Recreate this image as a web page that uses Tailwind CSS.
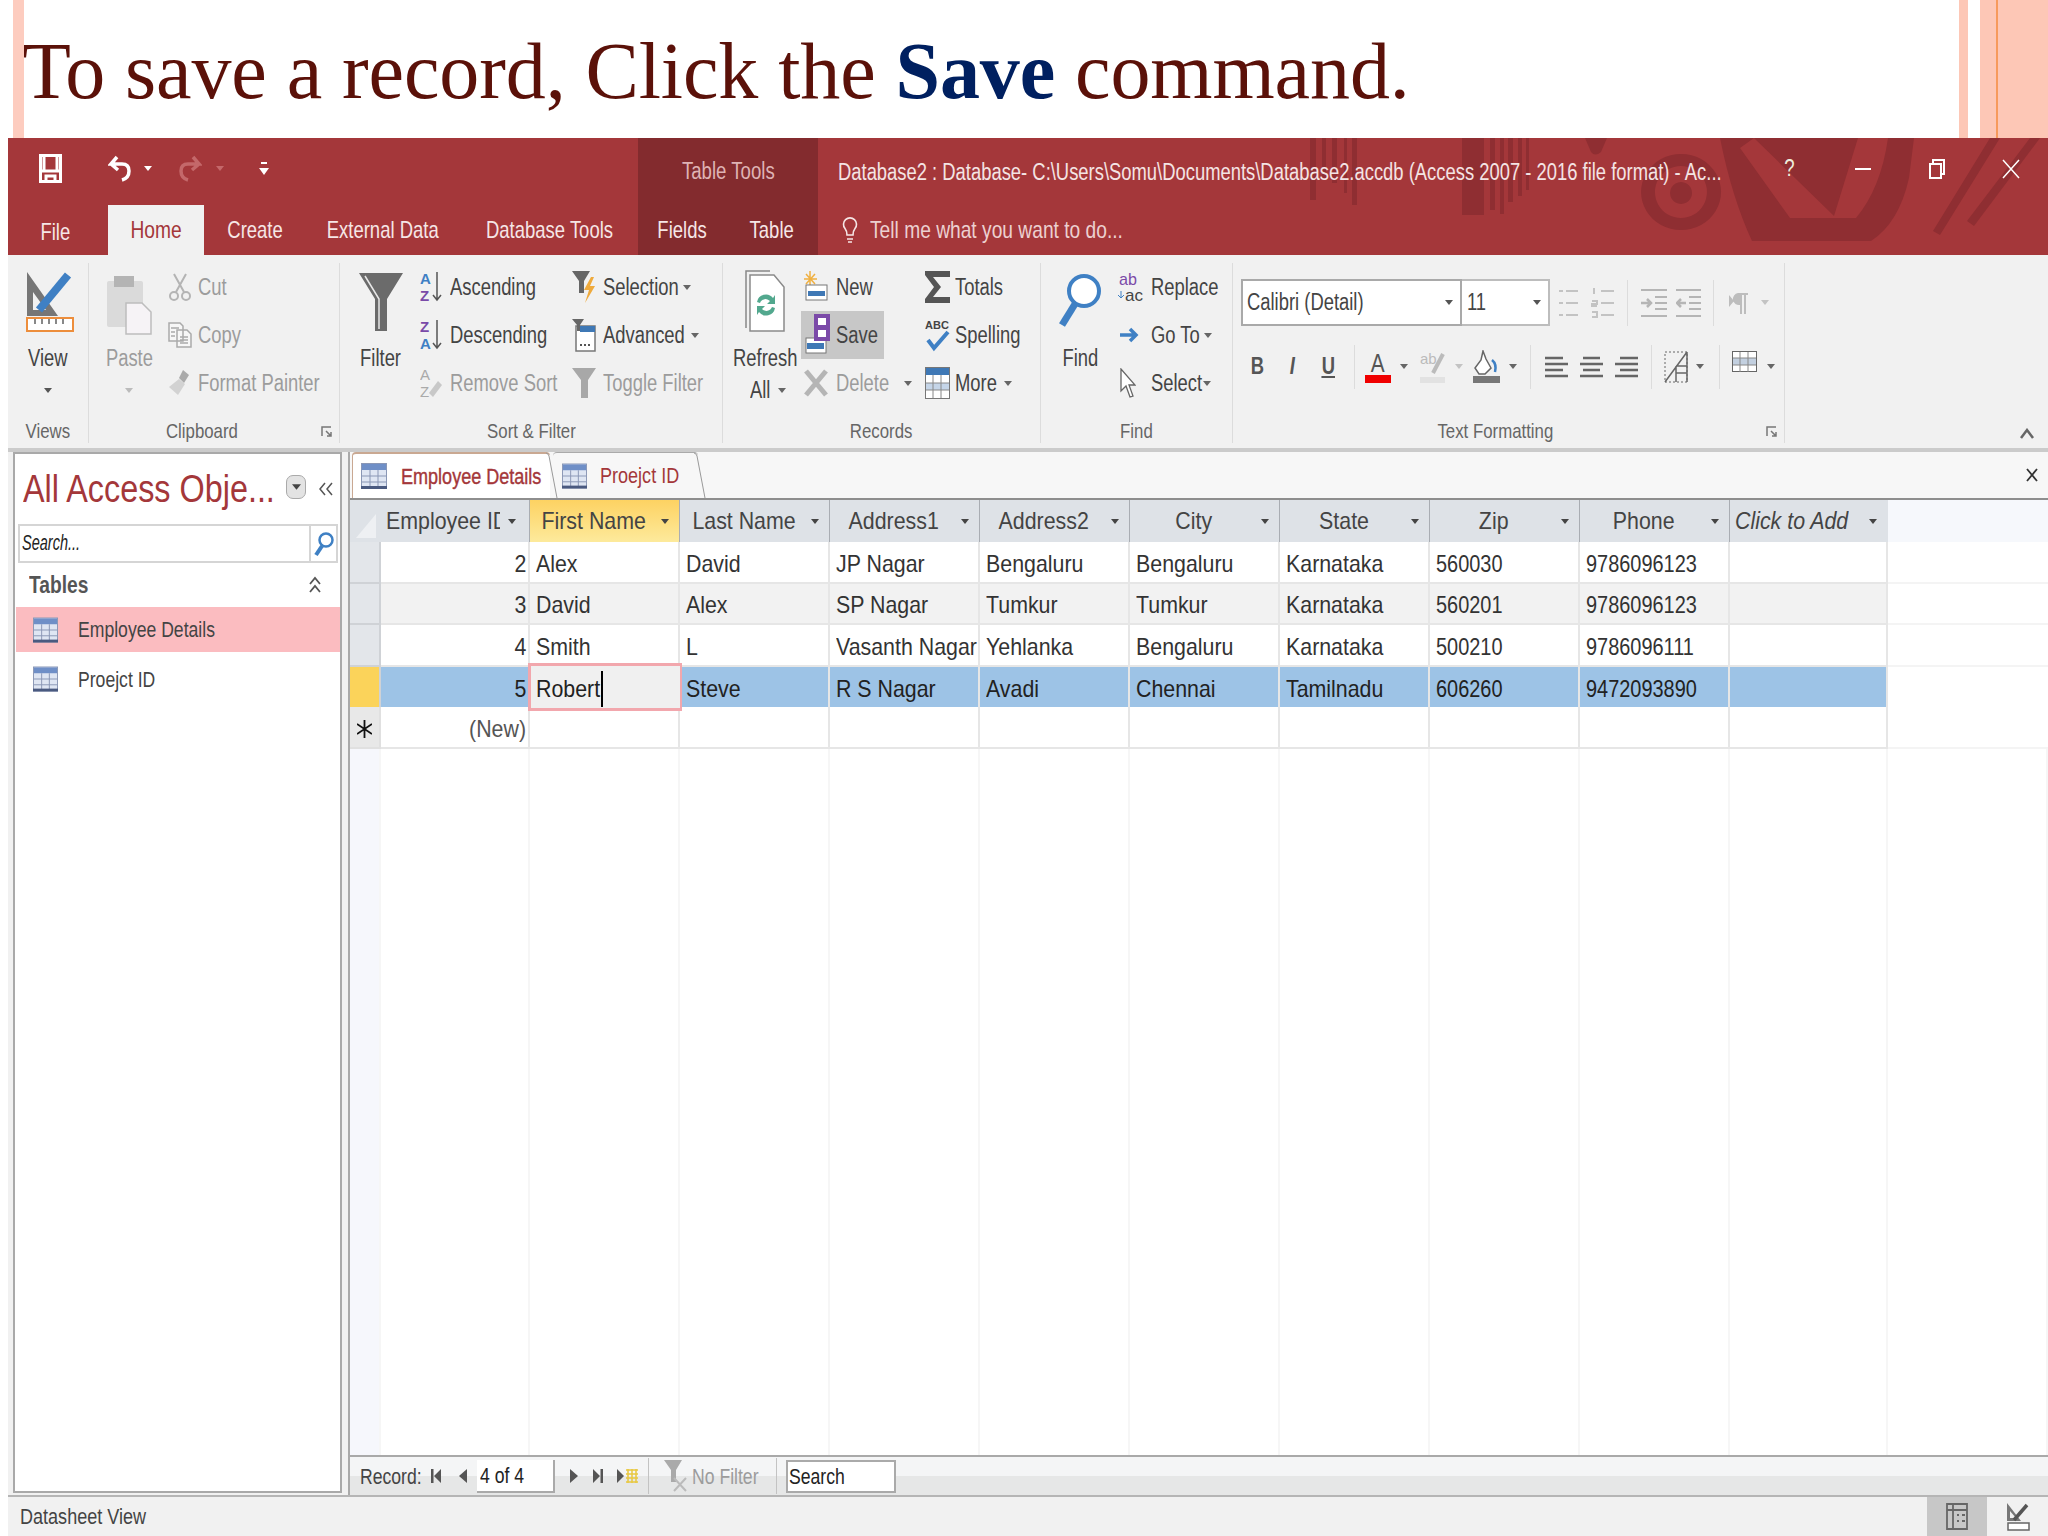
<!DOCTYPE html>
<html lang="en">
<head>
<meta charset="UTF-8">
<title>To save a record</title>
<script src="https://cdn.jsdelivr.net/npm/@tailwindcss/browser@4"></script>
</head>
<body class="bg-white">
<svg class="hidden">
  <symbol id="caret" viewBox="0 0 8 5"><path d="M0 0h8L4 5z" fill="currentColor"/></symbol>
  <symbol id="tbl" viewBox="0 0 26 26">
    <rect x="0.5" y="0.5" width="25" height="25" fill="#dfe6f3" stroke="#8a97b5"/>
    <rect x="1" y="1" width="24" height="6" fill="#6f8fc7"/>
    <path d="M1 13h24M1 19h24M9 7v18M17 7v18" stroke="#8a97b5"/>
    <rect x="0" y="23" width="26" height="3" fill="#4a5a80"/>
  </symbol>
</svg>

<div class="relative w-[2048px] h-[1536px] overflow-hidden bg-white font-['Liberation_Sans',sans-serif] text-[23px] text-[#444] whitespace-nowrap [&_span]:inline-block">

  <!-- slide title -->
  <div class="relative h-[138px] pl-[22px] pt-[25px] text-[80px] leading-[92px] tracking-[-0.1px] text-[#5b1109] font-['Liberation_Serif',serif]">
    To save a record, Click the <b class="text-[#002060]">Save</b> command.
    <div class="absolute left-[13px] top-0 w-[11px] h-full bg-[#fdccbf]"></div>
    <div class="absolute left-[1959px] top-0 w-[9px] h-full bg-[#fdc7b6]"></div>
    <div class="absolute left-[1980px] top-0 w-[68px] h-full bg-[#fdc7b6]"></div>
    <div class="absolute left-[1996px] top-0 w-[2px] h-full bg-[#f79a5c]"></div>
  </div>

  <div class="ml-[8px] w-[2040px] h-[1398px] flex flex-col bg-[#f1f1f1]">

    <!-- title bar -->
    <div class="relative h-[67px] flex items-center bg-[#a4373a] text-[23px] text-[#f4e4e4] [&>div]:shrink-0 [&_span]:origin-left [&_span]:scale-x-81">
      <svg class="absolute left-[1292px] top-0 w-[748px] h-[117px] z-0" viewBox="0 0 748 117" fill="#8f2e32">
        <path d="M10 0h6v62h-6zM22 0h4v40h-4zM32 0h5v45h-5zM44 0h3v55h-3zM52 0h5v67h-5zM162 0h22v77h-22zM190 0h5v72h-5zM200 0h4v76h-4zM208 0h5v64h-5zM218 0h4v58h-4zM226 0h3v52h-3z"/>
        <path d="M285 0h22l-6 14q-6 5-10 0z"/>
        <path fill-rule="evenodd" d="M381 16a40 38 0 1 0 .1 0zM381 28a26 26 0 1 1-.1 0zM381 44a11 11 0 1 0 .1 0z"/>
        <path fill-rule="evenodd" d="M420 0h194l-5 40q-10 45-38 63H452Q432 60 420 0zM440 10l50 70h66q25-30 32-80h-30l-24 78L454 0z"/>
        <path d="M633 93l57-93h10l-60 97zM667 83l63-83h10l-66 88z"/>
      </svg>
      <div class="relative w-[630px] mb-[6px] flex items-center pl-[31px]">
        <svg class="w-[23px] h-[29px]" viewBox="0 0 23 29" fill="none" stroke="#fff" stroke-width="3"><path d="M1.5 1.5h20v26h-20zM5 18V2M18 18V2M3 17h17M7 27v-5h9v5"/></svg>
        <svg class="ml-[46px] w-[24px] h-[27px]" viewBox="0 0 24 27" fill="none" stroke="#fff" stroke-width="3.5"><path d="M9 2L3 9h11q7 0 7 7t-7 9M3 9l7 6"/></svg>
        <svg class="ml-[12px] w-[8px] h-[5px] text-white"><use href="#caret"/></svg>
        <svg class="ml-[26px] w-[24px] h-[27px]" viewBox="0 0 24 27" fill="none" stroke="#c4686a" stroke-width="3.5"><path d="M15 2l6 7H10q-7 0-7 7t7 9M21 9l-7 6"/></svg>
        <svg class="ml-[14px] w-[8px] h-[5px] text-[#c4686a]"><use href="#caret"/></svg>
        <svg class="ml-[35px] w-[10px] h-[14px] text-white" viewBox="0 0 10 14" fill="currentColor"><path d="M2 0h6v2H2zM0 6h10l-5 7z"/></svg>
      </div>
      <div class="relative w-[180px] h-full flex items-center justify-center bg-[#832b2e] text-[#dfb3b4]"><span class="!origin-center">Table Tools</span></div>
      <div class="relative ml-[20px] pt-[2px] w-[885px]"><span class="!scale-x-80">Database2 : Database- C:\Users\Somu\Documents\Database2.accdb (Access 2007 - 2016 file format) - Ac...</span></div>
      <div class="relative ml-[29px] mb-[6px] flex text-[#eed]">
        <div class="w-[74px] flex justify-center"><span class="!origin-center">?</span></div>
        <div class="w-[74px] flex justify-center items-center"><div class="w-[16px] h-[2px] bg-white"></div></div>
        <div class="w-[74px] flex justify-center items-center">
          <svg class="w-[16px] h-[20px]" viewBox="0 0 16 20" fill="none" stroke="#fff" stroke-width="2"><path d="M4 4V1h11v14h-3M1 5h11v14H1z"/></svg>
        </div>
        <div class="w-[74px] flex justify-center items-center">
          <svg class="w-[18px] h-[20px]" viewBox="0 0 18 20" fill="none" stroke="#fff" stroke-width="1.5"><path d="M1 1l16 18M17 1L1 19"/></svg>
        </div>
      </div>
    </div>

    <!-- tabs -->
    <div class="h-[50px] flex items-stretch bg-[#a4373a] text-[24px] text-[#f6e6e6] [&_span]:origin-center [&_span]:scale-x-77 [&>div]:flex [&>div]:items-center [&>div]:justify-center">
      <div class="w-[100px] pr-[6px] pt-[4px]"><span>File</span></div>
      <div class="w-[96px] bg-[#f1f1f1] text-[#a4373a]"><span class="!scale-x-80">Home</span></div>
      <div class="w-[102px]"><span>Create</span></div>
      <div class="w-[154px]"><span>External Data</span></div>
      <div class="w-[178px]"><span>Database Tools</span></div>
      <div class="w-[88px] bg-[#832b2e]"><span>Fields</span></div>
      <div class="w-[92px] bg-[#832b2e]"><span>Table</span></div>
      <div class="ml-[24px] w-[420px] !justify-start gap-[12px] text-[#ecd0d0]">
        <svg class="w-[16px] h-[28px]" viewBox="0 0 16 28" fill="none" stroke="#f6e6e6" stroke-width="1.6"><path d="M5 19q0-4-2-6.500a6.500 6.500 0 1 1 10 0q-2 2.500-2 6.500zM5 23h6M6 26h4"/></svg>
        <span class="!origin-left !scale-x-80">Tell me what you want to do...</span>
      </div>
    </div>

    <!-- ribbon -->
    <div class="h-[193px] flex bg-[#f1f1f1] [&_span]:origin-left [&_span]:scale-x-80">

      <!-- Views -->
      <div class="w-[81px] mt-[8px] h-[180px] flex flex-col items-stretch border-r border-[#dcdcdc]">
        <div class="h-[156px] shrink-0 flex flex-col items-center pl-[4px]">
          <div class="h-[79px] flex items-start pt-[7px]">
            <svg class="w-[48px] h-[62px]" viewBox="0 0 48 62">
              <path fill="#767676" fill-rule="evenodd" d="M1 2v44h31zM7 22v18h13z"/>
              <path d="M13 40L42 5" stroke="#3f80c4" stroke-width="8"/>
              <rect x="1" y="48" width="46" height="13" fill="#fff" stroke="#ed8e3c" stroke-width="2"/>
              <path d="M9 49v5M16 49v5M23 49v5M30 49v5M37 49v5" stroke="#888" stroke-width="2"/>
            </svg>
          </div>
          <div class="h-[32px] -ml-[5px] flex items-center"><span class="!origin-center">View</span></div>
          <div class="h-[32px] -ml-[5px] flex items-center text-[#555]"><svg class="w-[8px] h-[5px]"><use href="#caret"/></svg></div>
        </div>
        <div class="text-center text-[21px] leading-[24px] text-[#666]"><span class="!origin-center">Views</span></div>
      </div>

      <!-- Clipboard -->
      <div class="w-[251px] mt-[8px] h-[180px] flex flex-col border-r border-[#dcdcdc] text-[#9c9c9c]">
        <div class="h-[156px] shrink-0 flex [&>div]:shrink-0">
          <div class="ml-[16px] w-[48px] flex flex-col items-center">
            <div class="h-[79px] pt-[10px]">
              <svg class="w-[46px] h-[62px]" viewBox="0 0 46 62">
                <rect x="1" y="8" width="36" height="46" rx="2" fill="#dadada"/>
                <rect x="8" y="3" width="20" height="11" fill="#b4b4b4"/>
                <path d="M20 30h16l9 9v22H20z" fill="#f6f3f6" stroke="#bdbdbd" stroke-width="1.5"/>
              </svg>
            </div>
            <div class="h-[32px] flex items-center"><span class="!origin-center">Paste</span></div>
            <div class="h-[32px] flex items-center text-[#bbb]"><svg class="w-[8px] h-[5px]"><use href="#caret"/></svg></div>
          </div>
          <div class="ml-[15px] flex flex-col [&>div]:h-[48px] [&>div]:flex [&>div]:items-center">
            <div>
              <div class="w-[30px]"><svg class="w-[24px] h-[28px]" viewBox="0 0 24 28" fill="none" stroke="#b4b4b4" stroke-width="2"><circle cx="6" cy="23" r="4"/><circle cx="18" cy="23" r="4"/><path d="M8 19L18 1M16 19L6 1"/></svg></div>
              <span>Cut</span>
            </div>
            <div>
              <div class="w-[30px]"><svg class="w-[24px] h-[26px]" viewBox="0 0 24 26" fill="#f7f7f7" stroke="#aaa" stroke-width="1.5"><path d="M1 1h11l3 3v15H1zM9 8h10l4 4v13H9zM3 6h8M3 10h4M3 14h4M12 15h8M12 18h8M12 21h8"/></svg></div>
              <span>Copy</span>
            </div>
            <div>
              <div class="w-[30px]"><svg class="w-[24px] h-[28px]" viewBox="0 0 24 28"><path d="M15 1l6 5-5 8-5-5z" fill="#aaa"/><path d="M11 10l6 5-7 11-9-8z" fill="#d2d2d2"/></svg></div>
              <span>Format Painter</span>
            </div>
          </div>
        </div>
        <div class="relative text-center text-[21px] leading-[24px] text-[#666] pr-[24px]"><span class="!origin-center">Clipboard</span>
          <svg class="absolute right-[7px] top-[7px] w-[11px] h-[11px]" viewBox="0 0 11 11" fill="none" stroke="#777" stroke-width="1.500"><path d="M10 1H1v9M5 5l5 5M6 10h4V6"/></svg>
        </div>
      </div>

      <!-- Sort & Filter -->
      <div class="w-[383px] mt-[8px] h-[180px] flex flex-col border-r border-[#dcdcdc]">
        <div class="h-[156px] shrink-0 flex [&>div]:shrink-0">
          <div class="ml-[11px] w-[60px] flex flex-col items-center">
            <div class="h-[79px] pt-[10px]">
              <svg class="w-[44px] h-[58px]" viewBox="0 0 44 58"><path d="M0 0h44L28 26v32H16V26z" fill="#6b6b6b"/><path d="M6 3l14 23v30" fill="none" stroke="#e8e8e8" stroke-width="1.5"/></svg>
            </div>
            <div class="h-[32px] flex items-center"><span class="!origin-center">Filter</span></div>
          </div>
          <div class="ml-[9px] w-[152px] flex flex-col [&>div]:h-[48px] [&>div]:flex [&>div]:items-center">
            <div>
              <div class="w-[30px] shrink-0"><svg class="w-[22px] h-[32px]" viewBox="0 0 22 32" font-family="Liberation Sans" font-size="15" font-weight="bold"><text x="0" y="13" fill="#3f7fc4">A</text><text x="0" y="30" fill="#7a4aa8">Z</text><path d="M17 1v27M13 24l4 5 4-5" fill="none" stroke="#555" stroke-width="1.500"/></svg></div>
              <span>Ascending</span>
            </div>
            <div>
              <div class="w-[30px] shrink-0"><svg class="w-[22px] h-[32px]" viewBox="0 0 22 32" font-family="Liberation Sans" font-size="15" font-weight="bold"><text x="0" y="13" fill="#7a4aa8">Z</text><text x="0" y="30" fill="#3f7fc4">A</text><path d="M17 1v27M13 24l4 5 4-5" fill="none" stroke="#555" stroke-width="1.500"/></svg></div>
              <span>Descending</span>
            </div>
            <div class="text-[#9c9c9c]">
              <div class="w-[30px] shrink-0"><svg class="w-[22px] h-[32px]" viewBox="0 0 22 32" font-family="Liberation Sans" font-size="15"><text x="0" y="13" fill="#aaa">A</text><text x="0" y="30" fill="#aaa">Z</text><path d="M18 14l4 4-9 12-4-4z" fill="#c8c8c8"/></svg></div>
              <span>Remove Sort</span>
            </div>
          </div>
          <div class="flex flex-col [&>div]:h-[48px] [&>div]:flex [&>div]:items-center">
            <div>
              <div class="w-[31px]"><svg class="w-[23px] h-[32px]" viewBox="0 0 23 32"><path d="M0 0h18L12 10v12H7V10z" fill="#666"/><path d="M19 6l-7 13h5l-4 13 10-17h-5l4-9z" fill="#efaa3c"/></svg></div>
              <div class="w-[80px]"><span>Selection</span></div><svg class="w-[8px] h-[5px] text-[#666]"><use href="#caret"/></svg>
            </div>
            <div>
              <div class="w-[31px]"><svg class="w-[24px] h-[34px]" viewBox="0 0 24 34"><rect x="4" y="8" width="19" height="25" fill="#fff" stroke="#777" stroke-width="1.500"/><rect x="8" y="8" width="15" height="6" fill="#3f78b5"/><path d="M0 1h12L8 7v6H5V7z" fill="#666"/><path d="M8 27h2M12 27h2M16 27h2" stroke="#555" stroke-width="2"/></svg></div>
              <div class="w-[88px]"><span>Advanced</span></div><svg class="w-[8px] h-[5px] text-[#666]"><use href="#caret"/></svg>
            </div>
            <div class="text-[#9c9c9c]">
              <div class="w-[31px]"><svg class="w-[24px] h-[30px]" viewBox="0 0 24 30"><path d="M0 0h24L16 12v18H9V12z" fill="#a8a8a8"/></svg></div>
              <span>Toggle Filter</span>
            </div>
          </div>
        </div>
        <div class="text-center text-[21px] leading-[24px] text-[#666]"><span class="!origin-center">Sort &amp; Filter</span></div>
      </div>

      <!-- Records -->
      <div class="w-[318px] mt-[8px] h-[180px] flex flex-col border-r border-[#dcdcdc]">
        <div class="h-[156px] shrink-0 flex [&>div]:shrink-0">
          <div class="ml-[7px] w-[70px] flex flex-col items-center">
            <div class="h-[79px] pt-[7px]">
              <svg class="w-[40px] h-[62px]" viewBox="0 0 40 62" fill="none">
                <path d="M1 58V1h24" stroke="#888" stroke-width="1.500"/>
                <path d="M5 61V5h24l10 12v44z" fill="#fff" stroke="#8a8a8a" stroke-width="1.500"/>
                <path d="M12 32a9 9 0 0 1 16-4l2-3v9h-8l3-3a6 6 0 0 0-10 2zM30 38a9 9 0 0 1-16 4l-2 3v-9h8l-3 3a6 6 0 0 0 10-2z" fill="#52a88e"/>
              </svg>
            </div>
            <div class="h-[32px] flex items-center"><span class="!origin-center">Refresh</span></div>
            <div class="h-[32px] ml-[6px] flex items-center"><div class="w-[28px]"><span>All</span></div><svg class="w-[8px] h-[5px] text-[#666]"><use href="#caret"/></svg></div>
          </div>
          <div class="ml-[4px] w-[121px] flex flex-col [&>div]:h-[48px] [&>div]:flex [&>div]:items-center">
            <div>
              <div class="w-[32px]"><svg class="w-[24px] h-[32px]" viewBox="0 0 24 32"><path d="M6 0v16M0 8h13M2 3l9 10M11 3l-9 10" stroke="#f0b040" stroke-width="1.500"/><rect x="2" y="14" width="21" height="15" fill="#fff" stroke="#777"/><rect x="4" y="20" width="17" height="5" fill="#3f78b5"/></svg></div>
              <span>New</span>
            </div>
            <div class="-ml-[3px] pl-[3px] w-[83px] bg-[#c7c7c7]">
              <div class="w-[32px] shrink-0"><svg class="w-[26px] h-[42px]" viewBox="0 0 26 42"><rect x="2" y="24" width="20" height="15" fill="#fff" stroke="#777"/><rect x="3" y="29" width="17" height="6" fill="#3f78b5"/><rect x="10" y="0" width="16" height="27" fill="#7b4aa8"/><rect x="14" y="4" width="8" height="7" fill="#fff"/><rect x="14" y="16" width="8" height="7" fill="#fff"/></svg></div>
              <span>Save</span>
            </div>
            <div class="text-[#9c9c9c]">
              <div class="w-[32px]"><svg class="w-[24px] h-[28px]" viewBox="0 0 24 28" stroke="#b5b5b5" stroke-width="5"><path d="M2 2l20 24M22 2L2 26"/></svg></div>
              <div class="w-[68px]"><span>Delete</span></div><svg class="w-[8px] h-[5px] text-[#666]"><use href="#caret"/></svg>
            </div>
          </div>
          <div class="flex flex-col [&>div]:h-[48px] [&>div]:flex [&>div]:items-center">
            <div>
              <div class="w-[30px]"><svg class="w-[25px] h-[32px]" viewBox="0 0 25 32"><path d="M0 0h25v6H8l8 10-8 10h17v6H0v-4l9-12L0 4z" fill="#555"/></svg></div>
              <span>Totals</span>
            </div>
            <div>
              <div class="w-[30px]"><svg class="w-[25px] h-[34px]" viewBox="0 0 25 34"><text x="0" y="11" font-size="11" font-weight="bold" fill="#444" font-family="Liberation Sans">ABC</text><path d="M3 22l6 8L23 14" fill="none" stroke="#3f80c4" stroke-width="4"/></svg></div>
              <span>Spelling</span>
            </div>
            <div>
              <div class="w-[30px]"><svg class="w-[25px] h-[32px]" viewBox="0 0 25 32"><rect x="0.500" y="0.500" width="24" height="31" fill="#fff" stroke="#777"/><rect x="1" y="1" width="23" height="7" fill="#3f78b5"/><rect x="1" y="16" width="23" height="7" fill="#c5d5e8"/><path d="M1 16h23M1 23h23M8 8v23M16 8v23" stroke="#888"/></svg></div>
              <div class="w-[49px]"><span>More</span></div><svg class="w-[8px] h-[5px] text-[#666]"><use href="#caret"/></svg>
            </div>
          </div>
        </div>
        <div class="text-center text-[21px] leading-[24px] text-[#666] pr-[1px]"><span class="!origin-center">Records</span></div>
      </div>

      <!-- Find -->
      <div class="w-[192px] mt-[8px] h-[180px] flex flex-col border-r border-[#dcdcdc]">
        <div class="h-[156px] shrink-0 flex [&>div]:shrink-0">
          <div class="ml-[4px] w-[70px] flex flex-col items-center">
            <div class="h-[79px] pt-[10px]">
              <svg class="w-[44px] h-[56px]" viewBox="0 0 44 56" fill="none" stroke="#3f80c4"><circle cx="26" cy="18" r="15" stroke-width="4" fill="#fff"/><path d="M17 31L4 52" stroke-width="7"/></svg>
            </div>
            <div class="h-[32px] flex items-center"><span class="!origin-center">Find</span></div>
          </div>
          <div class="ml-[3px] flex flex-col [&>div]:h-[48px] [&>div]:flex [&>div]:items-center">
            <div>
              <div class="w-[33px]"><svg class="w-[26px] h-[32px]" viewBox="0 0 26 32" font-family="Liberation Sans" font-size="17"><text x="1" y="14" fill="#7b4aa8" textLength="18" lengthAdjust="spacingAndGlyphs">ab</text><text x="7" y="30" fill="#444" textLength="18" lengthAdjust="spacingAndGlyphs">ac</text><path d="M3 20v7M0 24l3 3 3-3" stroke="#3f80c4" fill="none"/></svg></div>
              <span>Replace</span>
            </div>
            <div>
              <div class="w-[33px]"><svg class="w-[19px] h-[16px] ml-[2px]" viewBox="0 0 19 16" fill="none" stroke="#3f80c4" stroke-width="3.500"><path d="M0 8h16M10 2l6 6-6 6"/></svg></div>
              <div class="w-[53px]"><span>Go To</span></div><svg class="w-[8px] h-[5px] text-[#666]"><use href="#caret"/></svg>
            </div>
            <div>
              <div class="w-[33px]"><svg class="w-[16px] h-[31px] ml-[2px]" viewBox="0 0 16 31" fill="#fff" stroke="#666" stroke-width="1.300"><path d="M1 1v22l5-5 4 11 3-1-4-11h6z"/></svg></div>
              <div class="w-[52px]"><span>Select</span></div><svg class="w-[8px] h-[5px] text-[#666]"><use href="#caret"/></svg>
            </div>
          </div>
        </div>
        <div class="text-center text-[21px] leading-[24px] text-[#666]"><span class="!origin-center">Find</span></div>
      </div>

      <!-- Text Formatting -->
      <div class="w-[552px] mt-[8px] h-[180px] flex flex-col border-r border-[#dcdcdc]">
        <div class="h-[156px] shrink-0 pl-[8px] pt-[16px] flex flex-col text-[#555]">
          <div class="h-[47px] flex items-center">
            <div class="w-[221px] h-full flex items-center justify-between pl-[4px] pr-[7px] bg-white border-2 border-[#a9a9a9] text-[#444]"><span>Calibri (Detail)</span><svg class="w-[8px] h-[5px] text-[#555]"><use href="#caret"/></svg></div>
            <div class="w-[88px] h-full flex items-center justify-between pl-[5px] pr-[7px] bg-white border-2 border-l-0 border-[#bdbdbd] text-[#444]"><span>11</span><svg class="w-[8px] h-[5px] text-[#555]"><use href="#caret"/></svg></div>
            <svg class="ml-[8px] w-[20px] h-[30px]" viewBox="0 0 20 30" stroke="#c3c3c3" stroke-width="2"><path d="M8 3h12M8 15h12M8 27h12M1 3h4M1 15h4M1 27h4"/></svg>
            <svg class="ml-[13px] w-[23px] h-[30px]" viewBox="0 0 23 30" fill="none" stroke="#c3c3c3" stroke-width="2"><path d="M10 3h13M10 15h13M10 27h13M3 0v6M1 13h5v3H1v2h5M1 24h5v5H1"/></svg>
            <div class="ml-[13px] w-px h-[46px] bg-[#dcdcdc]"></div>
            <svg class="ml-[13px] w-[26px] h-[30px]" viewBox="0 0 26 30" fill="none" stroke="#b5b5b5" stroke-width="2"><path d="M0 2h26M14 9h12M14 15h12M14 21h12M0 28h26"/><path d="M0 15h9M6 11l4 4-4 4" stroke-width="2.500"/></svg>
            <svg class="ml-[9px] w-[25px] h-[30px]" viewBox="0 0 25 30" fill="none" stroke="#b5b5b5" stroke-width="2"><path d="M0 2h25M13 9h12M13 15h12M13 21h12M0 28h25"/><path d="M1 15h9M5 11l-4 4 4 4" stroke-width="2.500"/></svg>
            <div class="ml-[12px] w-px h-[46px] bg-[#dcdcdc]"></div>
            <svg class="ml-[15px] w-[19px] h-[22px]" viewBox="0 0 19 22" fill="#bdbdbd"><path d="M0 3l5 6-5 6zM9 1h10v2h-2v19h-2V3h-2v19h-2v-9a6 6 0 0 1-2-12z"/></svg>
            <svg class="ml-[13px] w-[8px] h-[5px] text-[#c3c3c3]"><use href="#caret"/></svg>
          </div>
          <div class="mt-[24px] h-[33px] flex items-center">
            <b class="w-[32px] flex justify-center"><span class="!origin-center">B</span></b>
            <i class="w-[38px] flex justify-center font-bold"><span class="!origin-center">I</span></i>
            <b class="w-[34px] flex justify-center underline"><span class="!origin-center underline">U</span></b>
            <div class="ml-[9px] w-px h-[44px] bg-[#dcdcdc]"></div>
            <div class="ml-[10px] w-[26px] flex flex-col items-center leading-[24px] text-[#555]"><span class="!origin-center text-[26px]">A</span><div class="w-full h-[8px] bg-[#f00000]"></div></div>
            <svg class="ml-[9px] w-[8px] h-[5px] text-[#666]"><use href="#caret"/></svg>
            <svg class="ml-[12px] w-[25px] h-[32px]" viewBox="0 0 25 32"><text x="0" y="13" font-size="15" fill="#bbb" font-family="Liberation Sans">ab</text><path d="M13 22L23 3" stroke="#bbb" stroke-width="4"/><rect y="26" width="25" height="6" fill="#e2e2e2"/></svg>
            <svg class="ml-[10px] w-[8px] h-[5px] text-[#c3c3c3]"><use href="#caret"/></svg>
            <svg class="ml-[10px] w-[27px] h-[33px]" viewBox="0 0 27 33" fill="none"><path d="M10 1l3 8 5 9-6 6H6L2 18l6-8z" fill="#fff" stroke="#666" stroke-width="1.500"/><path d="M19 10q5 4 3 12" stroke="#3f80c4" stroke-width="2.500"/><rect y="26" width="27" height="7" fill="#777"/></svg>
            <svg class="ml-[9px] w-[8px] h-[5px] text-[#666]"><use href="#caret"/></svg>
            <div class="ml-[13px] w-px h-[44px] bg-[#dcdcdc]"></div>
            <svg class="ml-[14px] w-[23px] h-[22px]" viewBox="0 0 23 22" stroke="#666" stroke-width="2.500"><path d="M0 2h18M0 8h23M0 14h18M0 20h23"/></svg>
            <svg class="ml-[12px] w-[23px] h-[22px]" viewBox="0 0 23 22" stroke="#666" stroke-width="2.500"><path d="M3 2h17M0 8h23M3 14h17M0 20h23"/></svg>
            <svg class="ml-[12px] w-[23px] h-[22px]" viewBox="0 0 23 22" stroke="#666" stroke-width="2.500"><path d="M5 2h18M0 8h23M5 14h18M0 20h23"/></svg>
            <div class="ml-[13px] w-px h-[44px] bg-[#dcdcdc]"></div>
            <svg class="ml-[12px] w-[24px] h-[32px]" viewBox="0 0 24 32" fill="none" stroke="#666"><path d="M1 1h22v30H1z" stroke-dasharray="2 2"/><path d="M1 31L23 1M12 15v16M12 22h11M12 15h11M23 1v30" stroke-width="1.500"/></svg>
            <svg class="ml-[8px] w-[8px] h-[5px] text-[#666]"><use href="#caret"/></svg>
            <div class="ml-[15px] w-px h-[44px] bg-[#dcdcdc]"></div>
            <svg class="ml-[12px] -mt-[10px] w-[25px] h-[21px]" viewBox="0 0 25 21"><rect x="0.500" y="0.500" width="24" height="20" fill="#fff" stroke="#666"/><rect x="1" y="7" width="23" height="7" fill="#c3d0e0"/><path d="M1 7h23M1 14h23M8 1v20M16 1v20" stroke="#888"/></svg>
            <svg class="ml-[10px] w-[8px] h-[5px] text-[#666]"><use href="#caret"/></svg>
          </div>
        </div>
        <div class="relative text-center text-[21px] leading-[24px] text-[#666] pr-[26px]"><span class="!origin-center">Text Formatting</span>
          <svg class="absolute right-[7px] top-[7px] w-[11px] h-[11px]" viewBox="0 0 11 11" fill="none" stroke="#777" stroke-width="1.500"><path d="M10 1H1v9M5 5l5 5M6 10h4V6"/></svg>
        </div>
      </div>

      <div class="flex-1 flex items-end justify-end pr-[14px] pb-[9px]">
        <svg class="w-[14px] h-[11px]" viewBox="0 0 14 11" fill="none" stroke="#666" stroke-width="2.500"><path d="M1 10l6-8 6 8"/></svg>
      </div>
    </div>

    <div class="h-[4px] bg-[#cbcbcb]"></div>

    <!-- workspace -->
    <div class="h-[1043px] flex">
      <!-- nav pane -->
      <div class="ml-[5px] w-[329px] h-[1041px] flex flex-col border-2 border-[#a9a9a9] bg-white [&_span]:origin-left [&_span]:scale-x-80">
        <div class="h-[70px] flex items-center pl-[8px]">
          <div class="w-[258px] text-[39px] text-[#a4373a]"><span class="!scale-x-83">All Access Obje...</span></div>
          <div class="ml-[5px] mb-[4px] w-[20px] h-[24px] flex items-center justify-center rounded-[7px] bg-[#e3e3e3] border border-[#aaa] text-[#444]"><svg class="w-[9px] h-[6px]"><use href="#caret"/></svg></div>
          <svg class="ml-[13px] w-[14px] h-[14px]" viewBox="0 0 14 14" fill="none" stroke="#555" stroke-width="1.500"><path d="M6 1L1 7l5 6M13 1L8 7l5 6"/></svg>
        </div>
        <div class="ml-[3px] w-[320px] h-[39px] flex border-2 border-[#d5d5d5]">
          <div class="flex-1 pl-[2px] italic text-[22px] leading-[34px] text-[#222]"><span class="!scale-x-66">Search...</span></div>
          <div class="w-[27px] flex items-center justify-center border-l-2 border-[#d5d5d5]">
            <svg class="w-[20px] h-[26px]" viewBox="0 0 20 26" fill="none" stroke="#3f80c4"><circle cx="12" cy="9" r="6.500" stroke-width="2.500"/><path d="M8 15L2 24" stroke-width="4"/></svg>
          </div>
        </div>
        <div class="h-[44px] flex items-center justify-between pl-[14px] pr-[19px]">
          <span class="font-bold text-[#555] text-[24px]">Tables</span>
          <svg class="w-[12px] h-[18px]" viewBox="0 0 12 18" fill="none" stroke="#555" stroke-width="1.800"><path d="M1 8l5-6 5 6M1 16l5-6 5 6"/></svg>
        </div>
        <div class="ml-[1px] w-[324px] h-[45px] flex items-center pl-[17px] bg-[#fbbcc0] text-[22px]">
          <svg class="w-[25px] h-[26px]"><use href="#tbl"/></svg><span class="ml-[20px]">Employee Details</span>
        </div>
        <div class="ml-[1px] h-[54px] flex items-center pl-[17px] text-[22px]">
          <svg class="w-[25px] h-[26px]"><use href="#tbl"/></svg><span class="ml-[20px]">Proejct ID</span>
        </div>
      </div>

      <div class="w-[8px] border-r-2 border-[#a9a9a9]"></div>

      <!-- object pane -->
      <div class="w-[1698px] flex flex-col bg-white">
        <!-- document tabs -->
        <div class="h-[48px] flex items-end justify-start border-b-2 border-[#8e8e8e] bg-[#f7f7f7] text-[22px] text-[#a4373a] [&_span]:origin-left [&_span]:scale-x-82">
          <div class="relative ml-[2px] w-[198px] h-[46px] flex items-center pl-[8px] bg-white border-t-2 border-l border-[#c9a892] rounded-t-[4px]">
            <svg class="w-[26px] h-[26px] shrink-0"><use href="#tbl"/></svg><span class="ml-[14px] [-webkit-text-stroke:0.4px_#a4373a]">Employee Details</span>
            <svg class="absolute -right-[8px] -top-[2px] w-[12px] h-[46px]" viewBox="0 0 12 46" fill="none" stroke="#999"><path d="M0 1q2 0 3 3l8 42"/></svg>
          </div>
          <div class="relative ml-[3px] w-[145px] h-[46px] flex items-center pl-[9px] border-t border-[#aaa] rounded-t-[4px]">
            <svg class="w-[25px] h-[26px] shrink-0"><use href="#tbl"/></svg><span class="ml-[13px]">Proejct ID</span>
            <svg class="absolute -right-[8px] -top-[1px] w-[12px] h-[46px]" viewBox="0 0 12 46" fill="none" stroke="#999"><path d="M0 1q2 0 3 3l8 42"/></svg>
          </div>
          <div class="flex-1 h-full flex items-center justify-end pr-[10px] text-[#333]">
            <svg class="w-[12px] h-[14px]" viewBox="0 0 12 14" stroke="#333" stroke-width="1.800"><path d="M1 1l10 12M11 1L1 13"/></svg>
          </div>
        </div>

        <!-- datasheet -->
        <div class="flex-1 grid grid-cols-[31px_149px_150px_150px_150px_150px_150px_150px_150px_150px_158px_1fr] grid-rows-[42px_42px_41px_42px_40px_42px_1fr] text-[24px] text-[#333] [&_span]:origin-left [&_span]:scale-x-89">
          <div class="col-span-full grid grid-cols-subgrid bg-[#dee2e7] text-[#444] [&>div]:flex [&>div]:items-center [&>div]:border-r [&>div]:border-[#a9adb3]">
            <div class="!border-r-0 justify-center"><svg class="w-[20px] h-[34px]" viewBox="0 0 20 34"><path d="M0 34L20 10v24z" fill="#eef0f3"/></svg></div>
            <div class="pr-[10px]"><div class="w-[114px] ml-[5px] mr-[8px] overflow-hidden"><span>Employee ID</span></div><svg class="w-[8px] h-[5px] shrink-0"><use href="#caret"/></svg></div>
            <div class="pr-[10px] bg-[linear-gradient(#fdd262,#fdea9c)]"><div class="flex-1 text-center pr-[3px]"><span class="!origin-center">First Name</span></div><svg class="w-[8px] h-[5px]"><use href="#caret"/></svg></div>
            <div class="pr-[10px]"><div class="flex-1 text-center pr-[3px]"><span class="!origin-center">Last Name</span></div><svg class="w-[8px] h-[5px]"><use href="#caret"/></svg></div>
            <div class="pr-[10px]"><div class="flex-1 text-center pr-[3px]"><span class="!origin-center">Address1</span></div><svg class="w-[8px] h-[5px]"><use href="#caret"/></svg></div>
            <div class="pr-[10px]"><div class="flex-1 text-center pr-[3px]"><span class="!origin-center">Address2</span></div><svg class="w-[8px] h-[5px]"><use href="#caret"/></svg></div>
            <div class="pr-[10px]"><div class="flex-1 text-center pr-[3px]"><span class="!origin-center">City</span></div><svg class="w-[8px] h-[5px]"><use href="#caret"/></svg></div>
            <div class="pr-[10px]"><div class="flex-1 text-center pr-[3px]"><span class="!origin-center">State</span></div><svg class="w-[8px] h-[5px]"><use href="#caret"/></svg></div>
            <div class="pr-[10px]"><div class="flex-1 text-center pr-[3px]"><span class="!origin-center">Zip</span></div><svg class="w-[8px] h-[5px]"><use href="#caret"/></svg></div>
            <div class="pr-[10px]"><div class="flex-1 text-center pr-[3px]"><span class="!origin-center">Phone</span></div><svg class="w-[8px] h-[5px]"><use href="#caret"/></svg></div>
            <div class="pl-[5px] pr-[11px] justify-between !border-r-0 italic"><span>Click to Add</span><svg class="w-[8px] h-[5px]"><use href="#caret"/></svg></div>
            <div class="!border-r-0 bg-[#f6f8fc]"></div>
          </div>

          <div class="col-span-full grid grid-cols-subgrid [&>div]:flex [&>div]:items-center [&>div]:px-[6px] [&>div]:pt-[3px] [&>div]:border-r-2 [&>div]:border-b-2 [&>div]:border-[#e6e6e6]">
            <div class="bg-[#e3e6ea] !border-[#cfd2d6]"></div><div class="justify-end !pr-[2px]"><span class="!origin-right">2</span></div><div><span>Alex</span></div><div><span>David</span></div><div><span>JP Nagar</span></div><div><span>Bengaluru</span></div><div><span>Bengaluru</span></div><div><span>Karnataka</span></div><div><span class="!scale-x-83">560030</span></div><div><span class="!scale-x-83">9786096123</span></div><div></div><div class="!border-r-0 !border-b-[#f4f4f4]"></div>
          </div>
          <div class="col-span-full grid grid-cols-subgrid [&>div]:flex [&>div]:items-center [&>div]:px-[6px] [&>div]:pt-[3px] [&>div]:bg-[#f2f2f2] [&>div]:border-r-2 [&>div]:border-b-2 [&>div]:border-[#e6e6e6]">
            <div class="!bg-[#e3e6ea] !border-[#cfd2d6]"></div><div class="justify-end !pr-[2px]"><span class="!origin-right">3</span></div><div><span>David</span></div><div><span>Alex</span></div><div><span>SP Nagar</span></div><div><span>Tumkur</span></div><div><span>Tumkur</span></div><div><span>Karnataka</span></div><div><span class="!scale-x-83">560201</span></div><div><span class="!scale-x-83">9786096123</span></div><div></div><div class="!bg-white !border-r-0 !border-b-[#f4f4f4]"></div>
          </div>
          <div class="col-span-full grid grid-cols-subgrid [&>div]:flex [&>div]:items-center [&>div]:px-[6px] [&>div]:pt-[3px] [&>div]:border-r-2 [&>div]:border-b-2 [&>div]:border-[#e6e6e6]">
            <div class="bg-[#e3e6ea] !border-[#cfd2d6]"></div><div class="justify-end !pr-[2px]"><span class="!origin-right">4</span></div><div><span>Smith</span></div><div><span>L</span></div><div><span>Vasanth Nagar</span></div><div><span>Yehlanka</span></div><div><span>Bengaluru</span></div><div><span>Karnataka</span></div><div><span class="!scale-x-83">500210</span></div><div><span class="!scale-x-83">9786096111</span></div><div></div><div class="!border-r-0 !border-b-[#f4f4f4]"></div>
          </div>
          <div class="col-span-full grid grid-cols-subgrid text-[#222] [&>div]:flex [&>div]:items-center [&>div]:px-[6px] [&>div]:pt-[3px] [&>div]:bg-[#9dc3e6] [&>div]:border-r-2 [&>div]:border-[#e6e6e6]">
            <div class="!bg-[#fbd35a] !border-[#cfd2d6]"></div><div class="justify-end !pr-[2px]"><span class="!origin-right">5</span></div>
            <div class="relative z-10 -mx-[2px] -my-[4px] !px-[5px] !bg-[#f0f0f0] border-[3px] !border-[#f2a7ad]"><span>Robert</span><div class="-ml-[7px] w-[2px] h-[36px] bg-black"></div></div>
            <div><span>Steve</span></div><div><span>R S Nagar</span></div><div><span>Avadi</span></div><div><span>Chennai</span></div><div><span>Tamilnadu</span></div><div><span class="!scale-x-83">606260</span></div><div><span class="!scale-x-83">9472093890</span></div><div></div><div class="!bg-white !border-r-0"></div>
          </div>
          <div class="col-span-full grid grid-cols-subgrid [&>div]:flex [&>div]:items-center [&>div]:px-[6px] [&>div]:pt-[3px] [&>div]:border-r-2 [&>div]:border-b-2 [&>div]:border-[#e6e6e6]">
            <div class="bg-[#e8e8e8] justify-center !px-0 !border-[#e0e0e0]"><svg class="w-[15px] h-[18px]" viewBox="0 0 15 18" stroke="#111" stroke-width="1.800"><path d="M7.500 0v18M0 4l15 10M15 4L0 14"/></svg></div>
            <div class="justify-end !pr-[2px] text-[#555]"><span class="!origin-right">(New)</span></div><div></div><div></div><div></div><div></div><div></div><div></div><div></div><div></div><div></div><div class="!border-r-0 !border-b-[#f4f4f4]"></div>
          </div>
          <div class="col-span-full grid grid-cols-subgrid [&>div]:border-r-2 [&>div]:border-[#f6f6f6]">
            <div class="bg-[#f6f7fc]"></div><div></div><div></div><div></div><div></div><div></div><div></div><div></div><div></div><div></div><div></div><div></div>
          </div>
        </div>

        <!-- record navigation -->
        <div class="h-[40px] flex items-center pl-[10px] border-t-2 border-[#a9a9a9] bg-[linear-gradient(#f4f5f6_50%,#e6e7e7_50%)] text-[22px] [&_span]:origin-left [&_span]:scale-x-80">
          <div class="w-[61px]"><span>Record:</span></div>
          <svg class="ml-[10px] w-[10px] h-[14px]" viewBox="0 0 10 14" fill="#555"><path d="M0 0h2.500v14H0zM10 0v14L3 7z"/></svg>
          <svg class="ml-[18px] w-[8px] h-[14px]" viewBox="0 0 8 14" fill="#555"><path d="M8 0v14L0 7z"/></svg>
          <div class="ml-[10px] w-[78px] h-[33px] pl-[3px] bg-white border-b-2 border-r-2 border-[#aaa] text-[#222] leading-[31px]"><span>4 of 4</span></div>
          <svg class="ml-[15px] w-[8px] h-[14px]" viewBox="0 0 8 14" fill="#555"><path d="M0 0v14l8-7z"/></svg>
          <svg class="ml-[15px] w-[10px] h-[14px]" viewBox="0 0 10 14" fill="#555"><path d="M0 0v14l7-7zM7.500 0H10v14H7.500z"/></svg>
          <svg class="ml-[14px] w-[21px] h-[14px]" viewBox="0 0 21 14"><path d="M0 0v14l7-7z" fill="#555"/><path d="M9 1h12M9 5h12M9 9h12M9 13h12M11 0v14M15 0v14M19 0v14" stroke="#e8c840" stroke-width="1.500"/></svg>
          <div class="ml-[10px] w-px h-[36px] bg-[#c3c3c3]"></div>
          <svg class="ml-[15px] w-[24px] h-[32px]" viewBox="0 0 24 32"><path d="M0 0h18L12 10v12H7V10z" fill="#aaa"/><path d="M10 18l12 13M22 18L10 31" stroke="#bbb" stroke-width="2"/></svg>
          <div class="ml-[4px] w-[70px] text-[#9c9c9c]"><span>No Filter</span></div>
          <div class="ml-[14px] w-px h-[36px] bg-[#c3c3c3]"></div>
          <div class="ml-[9px] w-[110px] h-[33px] pl-[1px] bg-white border-2 border-[#aaa] text-[#222] leading-[29px]"><span>Search</span></div>
        </div>
      </div>
    </div>

    <!-- status bar -->
    <div class="h-[41px] flex items-stretch border-t-2 border-[#b5b5b5] bg-[#f1f1f1] text-[22px] [&_span]:origin-left [&_span]:scale-x-82">
      <div class="ml-[12px] w-[1907px] flex items-center"><span>Datasheet View</span></div>
      <div class="w-[60px] flex items-center justify-center bg-[#c7c7c7]">
        <svg class="w-[22px] h-[27px]" viewBox="0 0 22 27" fill="none" stroke="#666" stroke-width="1.800"><path d="M1 1h20v25H1zM7 1v25M1 7h20M11 12h2M16 12h3M11 18h2M16 18h3"/></svg>
      </div>
      <div class="flex-1 flex items-center justify-center">
        <svg class="w-[24px] h-[28px]" viewBox="0 0 24 28"><path fill="#777" fill-rule="evenodd" d="M1 0v18h14zM4 8v7h6z"/><path d="M8 17L21 2" stroke="#555" stroke-width="3.500"/><rect x="2" y="20" width="21" height="7" fill="#fff" stroke="#666" stroke-width="1.500"/></svg>
      </div>
    </div>
  </div>
</div>
</body>
</html>
